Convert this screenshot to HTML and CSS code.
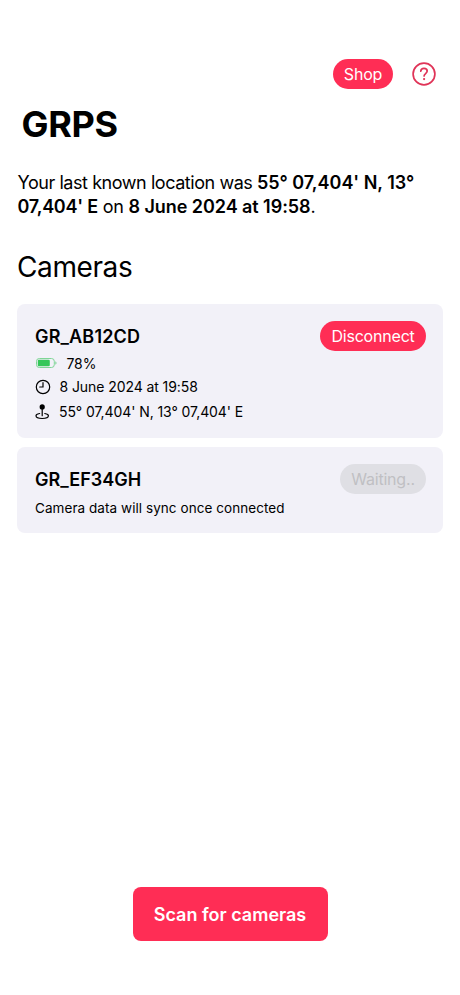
FILE: index.html
```html
<!DOCTYPE html>
<html lang="en">
<head>
<meta charset="utf-8">
<title>GRPS</title>
<link rel="stylesheet" href="styles.css">
</head>
<body>
<main class="app">
  <header class="toolbar">
    <button class="pill shop"><span>Shop</span></button>
    <svg class="help" viewBox="0 0 24 24" role="img" aria-label="Help"><circle cx="12" cy="12" r="10.9"/><path d="M8.8 9.2C8.9 7.3 10.1 6.3 12 6.3s3.2 1 3.2 2.8c0 2.4-3.1 2.5-3.1 4.8"/><circle class="dot" cx="12.1" cy="17.1" r="1.1"/></svg>
  </header>
  <h1><span>GRPS</span></h1>
  <p class="location"><span class="lead">Your last known location was </span><b>55° 07,404' N, 13°</b><br><b class="east">07,404' E</b> on <b class="date">8 June 2024 at 19:58</b>.</p>
  <h2><span>Cameras</span></h2>
  <section class="cameras">
    <article class="card connected">
      <div class="card-head"><h3><span>GR_AB12CD</span></h3><button class="pill disconnect"><span>Disconnect</span></button></div>
      <ul class="details">
        <li class="battery"><svg class="battery-icon" viewBox="0 0 22 10"><rect class="shell" x=".5" y=".5" width="17.8" height="9" rx="2.8"/><rect class="level" x="1.8" y="1.8" width="12" height="6.4" rx="1.3"/><path class="cap" d="M19.3 3.2c1.7.6 1.7 3 0 3.6z"/></svg><span>78%</span></li>
        <li class="time"><svg class="line-icon" viewBox="0 0 16 16"><circle cx="8" cy="8" r="6.7"/><path d="M8 3.7V8H4.7"/></svg><span>8 June 2024 at 19:58</span></li>
        <li class="place"><svg class="line-icon" viewBox="0 0 16 16"><circle class="solid" cx="7.2" cy="2.9" r="2.6"/><path d="M7.2 5v6.7M4.6 9.5C2.3 9.8 1 10.7 1 11.8c0 1.6 2.7 2.7 6.2 2.7s6.2-1.1 6.2-2.7c0-1.1-1.3-2-3.6-2.3"/></svg><span>55° 07,404' N, 13° 07,404' E</span></li>
      </ul>
    </article>
    <article class="card waiting-card">
      <div class="card-head"><h3><span>GR_EF34GH</span></h3><button class="pill waiting" disabled><span>Waiting..</span></button></div>
      <p class="note"><span>Camera data will sync once connected</span></p>
    </article>
  </section>
  <button class="scan"><span>Scan for cameras</span></button>
</main>
</body>
</html>
```
FILE: styles.css
```css
* { box-sizing: border-box; }
body, h1, h2, h3, p, ul { margin: 0; padding: 0; }
body { background: #fff; color: #000; font-family: Inter, sans-serif; }
button { border: 0; padding: 0; font-family: inherit; }
span { white-space: nowrap; }
.app { height: 995px; padding: 59px 17px 54px; display: flex; flex-direction: column; }
.toolbar { display: flex; justify-content: flex-end; align-items: center; gap: 19px; height: 30px; padding-right: 7px; }
.pill { display: flex; align-items: center; justify-content: center; height: 30px; border-radius: 15px; background: #ff2d55; color: #fff; font-size: 16px; letter-spacing: -.2px; }
.shop { width: 60px; }
.help { width: 24px; height: 24px; fill: none; stroke: #e03458; stroke-width: 1.7; stroke-linecap: round; }
.help .dot { fill: #e03458; stroke: none; }
h1 { margin: 13px 0 0 4.5px; font-size: 36px; line-height: 44px; font-weight: 700; letter-spacing: -.35px; }
.location { margin-top: 25px; padding-left: .5px; font-size: 18px; line-height: 24px; white-space: nowrap; letter-spacing: -.2px; }
.location .lead { letter-spacing: -.44px; white-space: pre; }
.location b { font-weight: 600; letter-spacing: -.03px; }
.location .east { letter-spacing: -.25px; }
.location .date { letter-spacing: -.06px; }
h2 { margin-top: 30px; font-size: 28px; line-height: 36px; font-weight: 400; letter-spacing: -.4px; }
.cameras { display: flex; flex-direction: column; gap: 9px; margin-top: 18.5px; }
.card { background: #f2f1f8; border-radius: 8px; padding: 17px 17px 0 18px; }
.connected { height: 134.5px; }
.waiting-card { height: 85.5px; }
.card-head { display: flex; align-items: center; justify-content: space-between; height: 30px; }
h3 { padding-top: 2px; font-size: 18px; line-height: 24px; font-weight: 600; }
.connected h3 { letter-spacing: .15px; }
.disconnect { width: 106px; }
.waiting { width: 86px; background: #dfdfe4; color: #bfbfc3; }
.details { list-style: none; font-size: 14px; }
.details li { display: flex; align-items: center; height: 24px; gap: 8.5px; letter-spacing: -.08px; }
.battery-icon { width: 22px; height: 10px; margin: 0 0 0 1px; }
.details .battery { letter-spacing: -.1px; height: 25px; }
.line-icon { width: 16px; height: 16px; fill: none; stroke: #000; stroke-width: 1.2; stroke-linecap: round; }
.details .time { height: 22px; }
.details .place { height: 28px; gap: 8px; }
.shell { fill: none; stroke: #7fd596; }
.level { fill: #34c759; }
.cap { fill: #7fd596; }
.solid { fill: #000; stroke: none; }
.note { font-size: 13.5px; line-height: 20px; margin-top: 4px; letter-spacing: .06px; }
.scan { width: 195px; height: 54px; margin: auto auto 0; border-radius: 8px; background: #ff2d55; color: #fff; font-size: 18px; font-weight: 600; }
```
